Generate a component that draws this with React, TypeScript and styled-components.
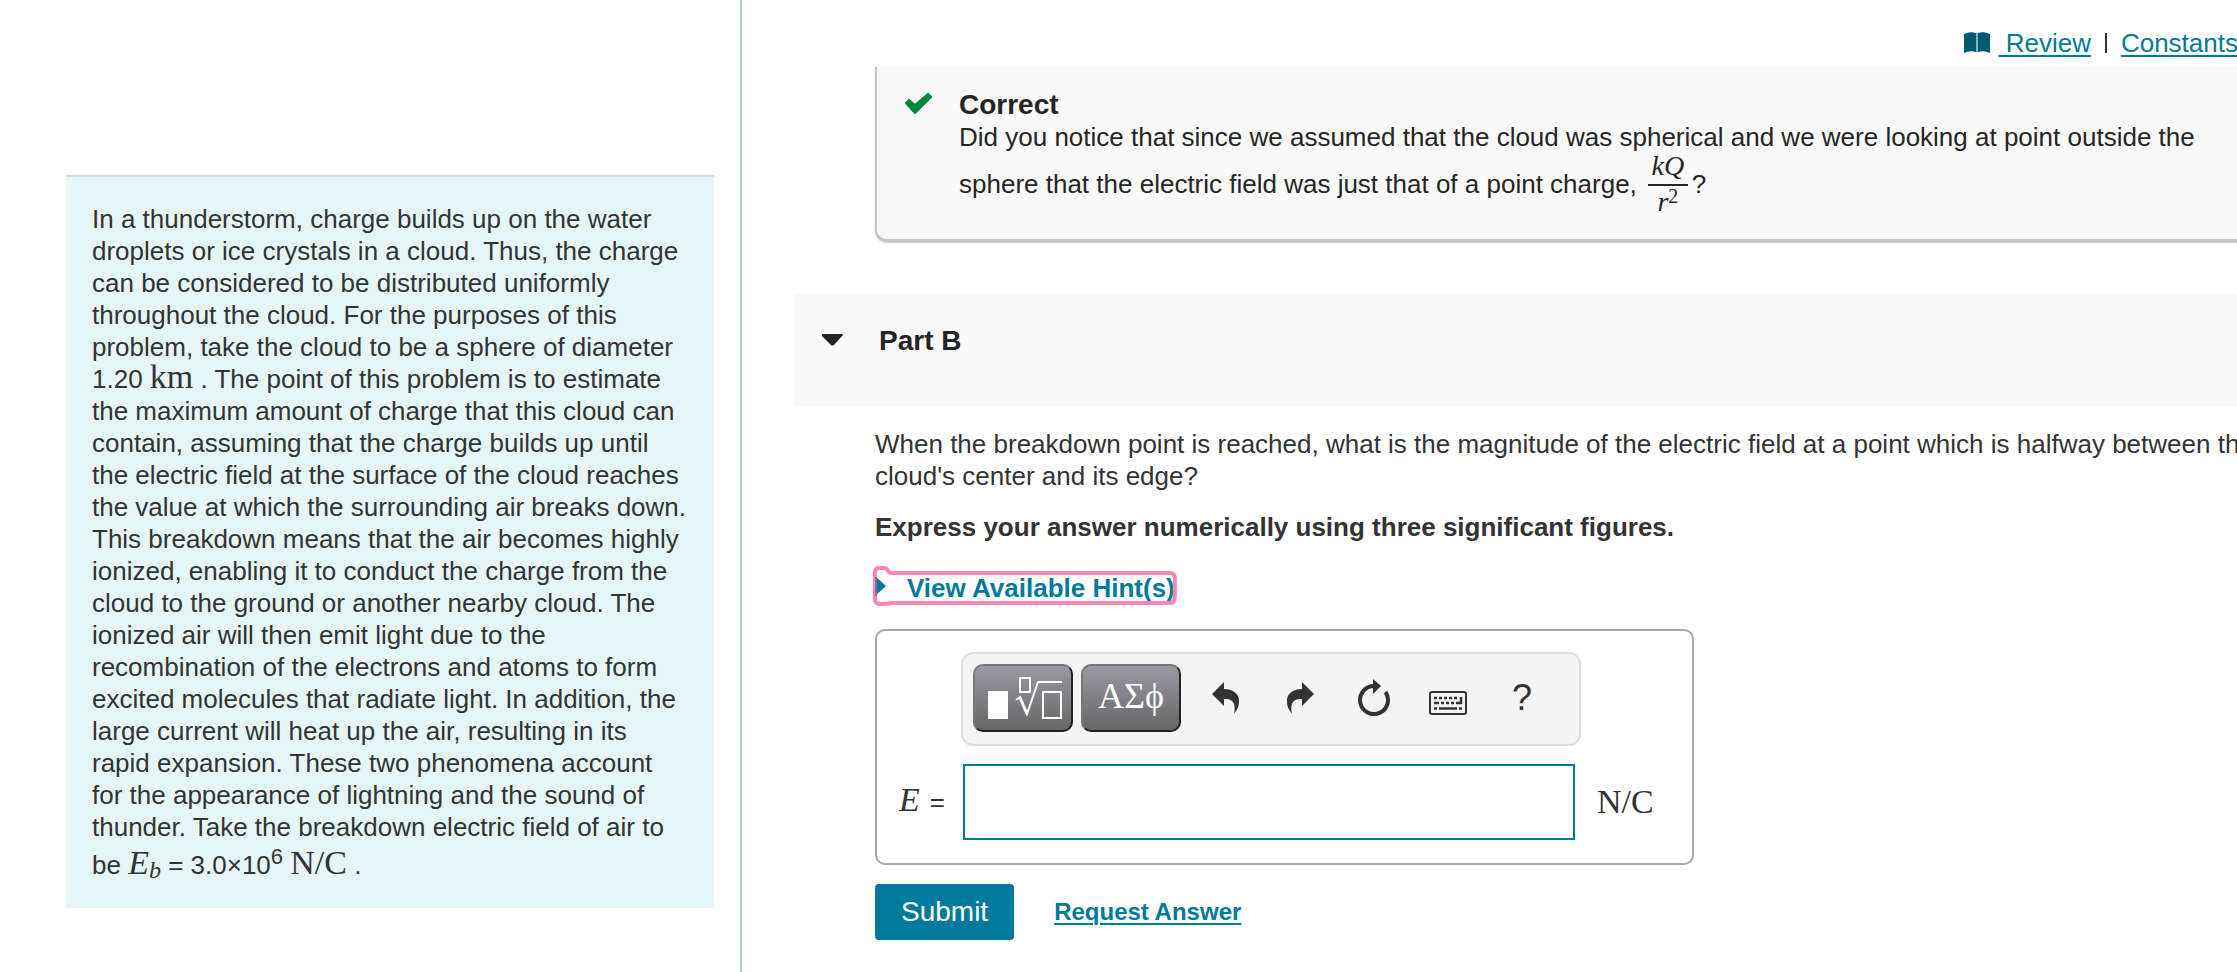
import React from "react";
import styled, { createGlobalStyle } from "styled-components";

const sans = `"Liberation Sans", Arial, Helvetica, sans-serif`;
const serif = `"Liberation Serif", "Times New Roman", serif`;
const teal = "#007a9c";

const GlobalStyle = createGlobalStyle`
  *, *::before, *::after { box-sizing: border-box; }
  body {
    margin: 0;
    background: #fff;
    color: #333;
    font-family: ${sans};
    font-size: 26px;
    line-height: 32px;
  }
  p, h2, h3 { margin: 0; }
`;

const Page = styled.div`
  display: grid;
  grid-template-columns: 742px minmax(0, 1fr);
  min-height: 100vh;
  overflow: hidden;
`;

const Sidebar = styled.aside`
  padding: 175px 26px 64px 66px;
  border-right: 2px solid #b7c9dc;
`;

const Introduction = styled.p`
  padding: 26px;
  border-top: 2px solid #ddd;
  background: #e6f6f7;
  white-space: nowrap;
`;

const Content = styled.main`
  padding-left: 52px;
  min-width: 0;
`;

const Nav = styled.nav`
  display: flex;
  justify-content: flex-end;
  align-items: center;
  height: 67px;
  margin-right: -1px;
  padding-top: 18px;
  white-space: pre;
`;

const Link = styled.a<{ $strong?: boolean }>`
  color: ${teal};
  text-decoration: underline;
  text-decoration-thickness: 2px;
  text-underline-offset: 3px;
  font-size: ${(p) => (p.$strong ? 24 : 26)}px;
  font-weight: ${(p) => (p.$strong ? 700 : 400)};
`;

const BookIcon = styled.svg`
  width: 26px;
  height: 22px;
  margin-right: 8px;
`;

const Divider = styled.span`
  width: 2px;
  height: 20px;
  margin: 0 14px;
  background: #333;
`;

const Feedback = styled.section`
  display: flex;
  height: 175px;
  margin: 0 -40px 0 81px;
  padding: 22px 0 0 28px;
  gap: 26px;
  border: solid #c6c8c7;
  border-width: 0 0 3px 2px;
  border-bottom-left-radius: 12px;
  background: #f9f9f9;
  box-shadow: 0 1px 2px #ccc;
  color: #252525;
  white-space: nowrap;
`;

const CheckIcon = styled.svg`
  width: 28px;
  height: 24px;
  margin-top: 3px;
`;

const Title = styled.h2`
  font-size: 28px;
  line-height: 32px;
  color: #252525;
`;

const FractionLine = styled.p`
  display: flex;
  align-items: center;
  height: 62px;
`;

const Fraction = styled.span`
  display: inline-flex;
  flex-direction: column;
  align-items: center;
  width: 40px;
  margin: 0 4px 0 11px;
  font: italic 28px/30px ${serif};
`;

const Numerator = styled.span`
  align-self: stretch;
  padding-bottom: 4px;
  border-bottom: 2px solid #252525;
  line-height: 28px;
  text-align: center;
`;

const Denominator = styled.span`
  line-height: 28px;

  sup {
    font: 20px/1 ${serif};
    vertical-align: 8px;
  }
`;

const PartHeader = styled.header`
  display: flex;
  align-items: flex-start;
  height: 113px;
  margin-top: 52px;
  padding: 31px 28px;
  gap: 36px;
  background: #f9f9f9;
`;

const Collapse = styled.button`
  display: flex;
  margin-top: 9px;
  padding: 0;
  border: 0;
  background: none;
`;

const Question = styled.section`
  padding: 21px 0 32px 81px;
  white-space: nowrap;
`;

const Instruction = styled.p`
  margin-top: 19px;
  font-weight: 700;
`;

const HintButton = styled.button`
  position: relative;
  display: flex;
  align-items: center;
  height: 34px;
  margin: 28px 0 24px -2px;
  padding: 0 2px 0 0;
  border: 0;
  background: none;
  color: ${teal};
  font: 700 26px/32px ${sans};
`;

const HintFocus = styled.svg`
  position: absolute;
  left: 0;
  bottom: -1px;
  width: 100%;
  height: 40px;
  overflow: visible;
`;

const HintLabel = styled.span`
  margin-left: 34px;
`;

const AnswerBox = styled.div`
  display: grid;
  grid-template-columns: 64px 620px auto;
  justify-content: start;
  align-items: center;
  column-gap: 16px;
  row-gap: 18px;
  width: 819px;
  height: 236px;
  padding: 21px 4px;
  align-content: start;
  border: 2px solid #a8a8a8;
  border-radius: 10px;
`;

const Toolbar = styled.div`
  grid-column: 2 / 3;
  display: flex;
  align-items: center;
  height: 94px;
  padding: 0 10px 2px;
  border: 2px solid #ddd;
  border-radius: 12px;
  background: #f4f4f4;
`;

const PaletteButton = styled.button`
  display: flex;
  align-items: center;
  justify-content: center;
  width: 100px;
  height: 68px;
  margin-right: 8px;
  padding: 0 0 4px;
  border: 2px solid;
  border-color: #777 #222 #222 #777;
  border-radius: 10px;
  background: linear-gradient(#9b99a3, #666);
  color: #fff;
  font: 36px/40px ${serif};
`;

const ToolButton = styled.button`
  display: flex;
  align-items: center;
  justify-content: center;
  width: 74px;
  height: 68px;
  padding: 0;
  border: 0;
  background: none;
  color: #333;
  font: 36px/40px ${sans};
`;

const FieldLabel = styled.label`
  grid-column: 1;
  display: flex;
  align-items: baseline;
  justify-self: end;
  gap: 10px;
`;

const Variable = styled.i`
  font-family: ${serif};
  font-size: 34px;
  line-height: 24px;
`;

const Subscript = styled.sub`
  font: italic 24px/1 ${serif};
  vertical-align: -4px;
`;

const Exponent = styled.sup`
  font-size: 22px;
  line-height: 28px;
  vertical-align: 10px;
`;

const Unit = styled.span`
  font-family: ${serif};
  font-size: 34px;
  line-height: 24px;
`;

const AnswerInput = styled.input`
  width: 612px;
  height: 76px;
  margin-left: 2px;
  padding: 0 12px;
  border: 2px solid ${teal};
  border-radius: 0;
  background: #fff;
  font: 28px/32px ${sans};
`;

const Actions = styled.div`
  display: flex;
  align-items: center;
  gap: 40px;
  margin-top: 19px;
`;

const Submit = styled.button`
  height: 56px;
  padding: 0 26px;
  border: 0;
  border-radius: 4px;
  background: ${teal};
  color: #fff;
  font: 28px/32px ${sans};
`;

const RootTemplateIcon = () => (
  <svg width="80" height="46" viewBox="0 0 80 46" fill="none" stroke="#fff" strokeWidth="2">
    <rect x="5" y="18" width="20" height="28" fill="#fff" stroke="none" />
    <rect x="37" y="5" width="10" height="14" />
    <path d="M33 27l4-3 7 17L55 9h24" />
    <path d="M37 25l7 16" strokeWidth="3" />
    <rect x="60" y="19" width="18" height="26" />
  </svg>
);

const UndoIcon = ({ flip }: { flip?: boolean }) => (
  <svg width="28" height="32" viewBox="0 0 28 32">
    <path
      transform={flip ? "matrix(-1 0 0 1 28 0)" : undefined}
      d="M0 12L12 0V7C22 7 28 13 27 20C27 25 25 28 22 31.500C24 23 22 16 12 17V24Z"
      fill="#333"
    />
  </svg>
);

const ResetIcon = () => (
  <svg width="34" height="38" viewBox="0 0 34 38">
    <path d="M17 7A14 14 0 1 0 28.500 13" fill="none" stroke="#333" strokeWidth="4" />
    <path d="M16 0l8 7-8 8z" fill="#333" />
  </svg>
);

const KeyboardIcon = () => (
  <svg width="38" height="34" viewBox="0 -10 38 34" fill="none" stroke="#333">
    <rect x="1" y="1" width="36" height="22" rx="2" strokeWidth="2" />
    <path d="M5 7h3M10 7h3M15 7h3M20 7h3M25 7h3M5 12h5M12 12h3M17 12h3M22 12h3M27 12h6M32 6v7M5 17.500h3M10 17.500h18M30 17.500h3" strokeWidth="2.500" />
  </svg>
);

export default function App() {
  return (
    <>
      <GlobalStyle />
      <Page>
        <Sidebar>
          <Introduction>
            In a thunderstorm, charge builds up on the water<br />
            droplets or ice crystals in a cloud. Thus, the charge<br />
            can be considered to be distributed uniformly<br />
            throughout the cloud. For the purposes of this<br />
            problem, take the cloud to be a sphere of diameter<br />
            1.20 <Unit>km</Unit> . The point of this problem is to estimate<br />
            the maximum amount of charge that this cloud can<br />
            contain, assuming that the charge builds up until<br />
            the electric field at the surface of the cloud reaches<br />
            the value at which the surrounding air breaks down.<br />
            This breakdown means that the air becomes highly<br />
            ionized, enabling it to conduct the charge from the<br />
            cloud to the ground or another nearby cloud. The<br />
            ionized air will then emit light due to the<br />
            recombination of the electrons and atoms to form<br />
            excited molecules that radiate light. In addition, the<br />
            large current will heat up the air, resulting in its<br />
            rapid expansion. These two phenomena account<br />
            for the appearance of lightning and the sound of<br />
            thunder. Take the breakdown electric field of air to<br />
            be <Variable>E</Variable><Subscript>b</Subscript> = 3.0×10<Exponent>6</Exponent> <Unit>N/C</Unit> .
          </Introduction>
        </Sidebar>

        <Content>
          <Nav>
            <BookIcon viewBox="0 0 26 22" aria-hidden="true">
              <path d="M0 2Q6-1 12 1V20Q6 18 0 21ZM14 1Q20-1 26 2V21Q20 18 14 20Z" fill="#005a70" />
              <path d="M12 1h2v19h-2z" fill="#7fb0bb" />
            </BookIcon>
            <Link href="#review">{" Review"}</Link>
            <Divider />
            <Link href="#constants">Constants</Link>
          </Nav>

          <Feedback>
            <CheckIcon viewBox="0 0 28 24" aria-hidden="true">
              <path
                d="M1 11L4 8L10 13L23 2L26 5L10 21Z"
                fill="#008638"
                stroke="#008638"
                strokeWidth="2"
                strokeLinejoin="round"
              />
            </CheckIcon>
            <div>
              <Title>Correct</Title>
              <p>Did you notice that since we assumed that the cloud was spherical and we were looking at point outside the</p>
              <FractionLine>
                sphere that the electric field was just that of a point charge,
                <Fraction>
                  <Numerator>kQ</Numerator>
                  <Denominator>r<sup>2</sup></Denominator>
                </Fraction>
                ?
              </FractionLine>
            </div>
          </Feedback>

          <PartHeader>
            <Collapse aria-label="Collapse Part B">
              <svg width="21" height="12" viewBox="0 0 21 12">
                <path d="M1 0h19q2 1 0 2L12 11q-2 1-3 0L0 2q-1-2 1-2z" fill="#252525" />
              </svg>
            </Collapse>
            <Title>Part B</Title>
          </PartHeader>

          <Question>
            <p>
              When the breakdown point is reached, what is the magnitude of the electric field at a point which is halfway between the<br />
              cloud's center and its edge?
            </p>
            <Instruction>Express your answer numerically using three significant figures.</Instruction>

            <HintButton>
              <HintFocus viewBox="0 0 302 40" preserveAspectRatio="none" fill="none" aria-hidden="true">
                <path d="M3 11L13 20L3 29Z" fill={teal} />
                <path
                  d="M6 2H10Q14 2 15 5Q16 7 19 7H295Q300 7 300 12V31Q300 37 295 37H18Q14 38 10 38H7Q2 38 2 33V7Q2 2 6 2Z"
                  stroke="#f986b7"
                  strokeWidth="4"
                />
                <path d="M3 11V30" stroke="#a1608f" strokeWidth="2" />
              </HintFocus>
              <HintLabel>View Available Hint(s)</HintLabel>
            </HintButton>

            <AnswerBox>
              <Toolbar role="toolbar" aria-label="Equation editor">
                <PaletteButton aria-label="Templates"><RootTemplateIcon /></PaletteButton>
                <PaletteButton aria-label="Symbols">ΑΣϕ</PaletteButton>
                <ToolButton aria-label="Undo"><UndoIcon /></ToolButton>
                <ToolButton aria-label="Redo"><UndoIcon flip /></ToolButton>
                <ToolButton aria-label="Reset"><ResetIcon /></ToolButton>
                <ToolButton aria-label="Keyboard shortcuts"><KeyboardIcon /></ToolButton>
                <ToolButton aria-label="Help">?</ToolButton>
              </Toolbar>
              <FieldLabel htmlFor="answer"><Variable>E</Variable><span>=</span></FieldLabel>
              <AnswerInput id="answer" type="text" />
              <Unit>N/C</Unit>
            </AnswerBox>

            <Actions>
              <Submit>Submit</Submit>
              <Link $strong href="#answer">Request Answer</Link>
            </Actions>
          </Question>
        </Content>
      </Page>
    </>
  );
}
